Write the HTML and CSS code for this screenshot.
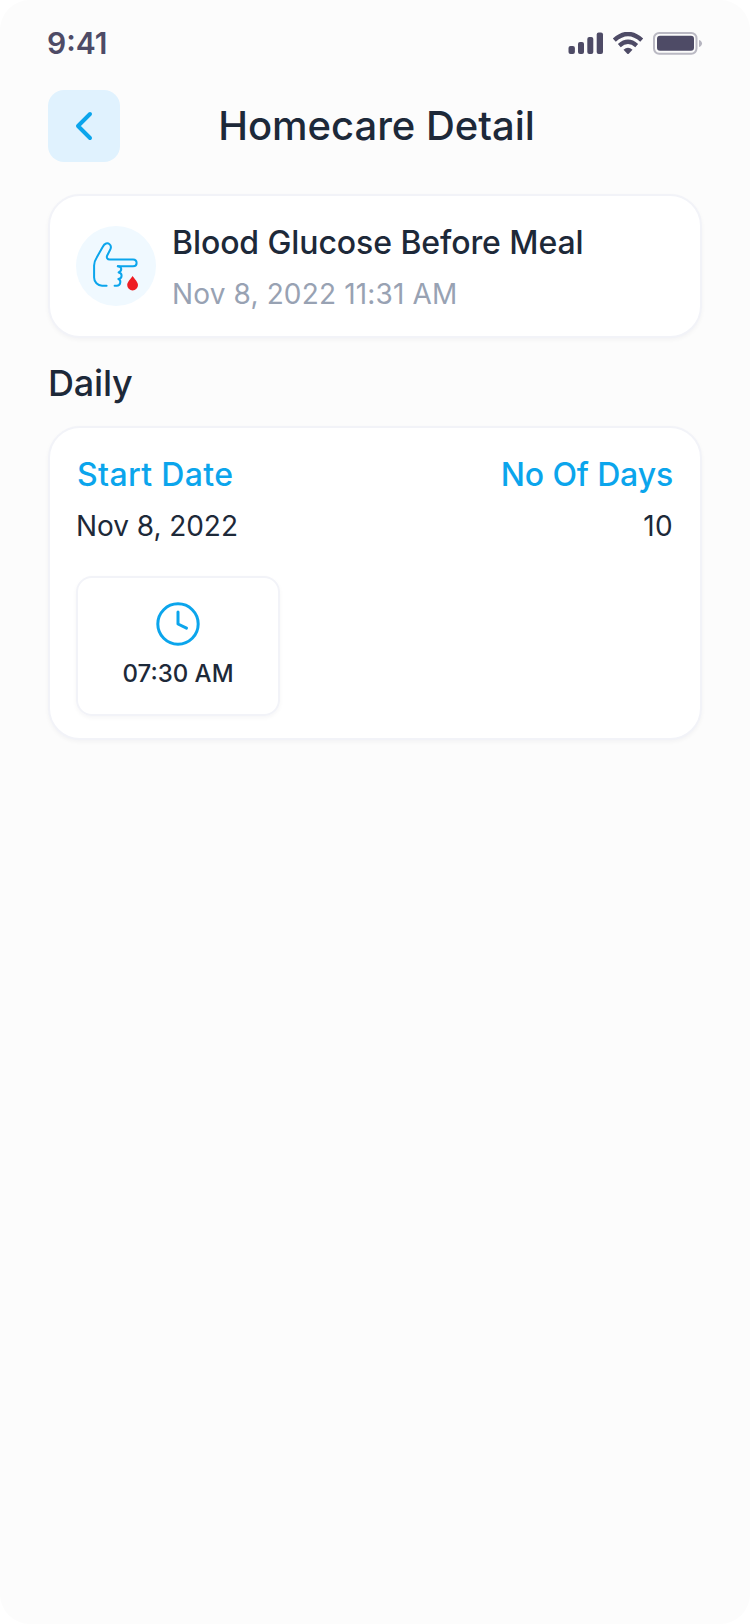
FILE: index.html
```html
<!DOCTYPE html>
<html lang="en">
<head>
<meta charset="utf-8">
<title>Homecare Detail</title>
<link rel="stylesheet" href="styles.css">
</head>
<body>
<main class="screen">
  <div class="status-bar">
    <span class="status-time">9:41</span>
    <svg class="status-icons" width="136" height="24" viewBox="0 0 136 24" fill="#4e4b66">
      <rect x="0.5" y="14" width="6.4" height="8" rx="2"/>
      <rect x="10" y="10" width="6" height="12" rx="2"/>
      <rect x="19.3" y="5" width="6" height="17" rx="2"/>
      <rect x="28.7" y="0.5" width="6.3" height="21.5" rx="2"/>
      <path d="M46.300 8.200 Q60 -4.200 73.700 8.200" fill="none" stroke="#4e4b66" stroke-width="4.400"/>
      <path d="M51.300 13.600 Q60 6 68.700 13.600" fill="none" stroke="#4e4b66" stroke-width="4.300"/>
      <path d="M55.500 17.800Q60 13.600 64.500 17.800L60.500 21.900Q60 22.300 59.500 21.900Z"/>
      <rect x="86" y="1" width="42.500" height="20.700" rx="5.200" fill="none" stroke="#4e4b66" stroke-opacity=".38" stroke-width="2"/>
      <rect x="89" y="3.700" width="37" height="15" rx="3"/>
      <path d="M131 8C133 8.600 134 10 134 11.500S133 14.400 131 15Z" fill-opacity=".4"/>
    </svg>
  </div>

  <header class="header">
    <button class="back" aria-label="Back">
      <svg width="72" height="72" viewBox="0 0 72 72" fill="none" stroke="#0ba5ec" stroke-width="4" stroke-linecap="round" stroke-linejoin="round"><path d="M42 24L30 36L42 48"/></svg>
    </button>
    <h1 class="title">Homecare Detail</h1>
  </header>

  <section class="card summary">
    <svg class="avatar" width="80" height="80" viewBox="0 0 80 80" fill="none">
      <circle cx="40" cy="40" r="40" fill="#f0f9ff"/>
      <g stroke="#0ba5ec" stroke-width="2" stroke-linecap="round" stroke-linejoin="round" transform="translate(-0.4 0)">
        <path d="M31 59.700H26.500C22 59.700 18.500 56 18.500 51.500V39.500C18.500 36 19.500 34 21 31.700L27.200 20.700C29 17.200 32 16.700 33.700 18C35.500 19.300 35.600 21.300 34.800 23.200L31.600 29.500C30.500 31.800 32 33.400 34 33.400H57.500C59.500 33.400 61 34.900 61 36.900S59.500 40.200 57.500 40.200H42.200"/>
        <path d="M42.200 40.200C46 40.200 47.200 44.500 43 46.400C47 47 47 52.300 42.800 53C46 54 45 59.700 41.200 59.700H39"/>
      </g>
      <path d="M56.600 50C58.200 52.600 62 56 62 59A5.400 5.400 0 0 1 51.200 59C51.200 56 55 52.600 56.600 50Z" fill="#ee1d23"/>
    </svg>
    <div class="summary-text">
      <h2 class="name">Blood Glucose Before Meal</h2>
      <p class="muted">Nov 8, 2022 11:31 AM</p>
    </div>
  </section>

  <h2 class="section-title">Daily</h2>

  <section class="card schedule">
    <div class="facts">
      <div>
        <h3 class="label start">Start Date</h3>
        <p class="value">Nov 8, 2022</p>
      </div>
      <div class="fact-end">
        <h3 class="label days">No Of Days</h3>
        <p class="value count">10</p>
      </div>
    </div>
    <div class="slot">
      <svg width="44" height="44" viewBox="0 0 44 44" fill="none" stroke="#0ba5ec" stroke-width="3" stroke-linecap="round" stroke-linejoin="round"><circle cx="22" cy="22" r="20.200"/><path d="M22 10V22L30.500 26.200"/></svg>
      <span class="slot-time">07:30 AM</span>
    </div>
  </section>
</main>
</body>
</html>
```

FILE: styles.css
```css
* { box-sizing: border-box; margin: 0; padding: 0; }

body {
  background: #fff;
  font-family: Inter, "Liberation Sans", sans-serif;
  color: #1d2939;
}

.screen {
  width: 750px;
  height: 1624px;
  padding: 0 48px;
  background: #fcfcfc;
  border-radius: 30px;
  overflow: hidden;
}

.status-bar {
  height: 90px;
  padding: 28px 0 0;
  display: flex;
  justify-content: space-between;
  align-items: flex-start;
}
.status-time {
  font-size: 30px;
  line-height: 30px;
  font-weight: 600;
  color: #4e4b66;
  margin-left: -1px;
}
.status-icons { margin: 4px -2px 0 0; }

.header {
  height: 72px;
  display: grid;
  grid-template-columns: 72px 1fr 72px;
  align-items: center;
}
.back {
  width: 72px;
  height: 72px;
  border: 0;
  border-radius: 16px;
  background: #e0f2fe;
}
.back svg { display: block; }
.title {
  padding-left: 3px;
  font-size: 40px;
  line-height: 72px;
  font-weight: 500;
  letter-spacing: -.04px;
  text-align: center;
  white-space: nowrap;
}

.card {
  background: #fff;
  border: 2px solid #f2f3f8;
  border-radius: 32px;
  box-shadow: 0 2px 4px rgba(16, 24, 40, .04);
}
.summary {
  height: 144px;
  margin-top: 32px;
  padding: 0 26px;
  display: flex;
  align-items: center;
  gap: 16px;
}
.summary-text { padding-top: 2px; }
.name {
  font-size: 32px;
  line-height: 48px;
  font-weight: 500;
  letter-spacing: -.09px;
}
.muted {
  margin-top: 5px;
  font-size: 28px;
  line-height: 44px;
  letter-spacing: .15px;
  color: #98a2b3;
}

.section-title {
  font-size: 36px;
  line-height: 90px;
  height: 88px;
  font-weight: 500;
  letter-spacing: -.2px;
}

.schedule {
  height: 314px;
  padding: 25px 26px 0;
}
.facts {
  display: flex;
  justify-content: space-between;
  height: 123px;
}
.fact-end {
  padding-right: 1px;
  text-align: right;
}
.label {
  font-size: 32px;
  line-height: 44px;
  font-weight: 500;
  color: #0ba5ec;
}
.start {
  padding-left: 1px;
  letter-spacing: .35px;
}
.days { letter-spacing: -.15px; }
.value {
  margin-top: 7px;
  font-size: 28px;
  line-height: 44px;
  letter-spacing: -.05px;
}
.count { letter-spacing: .4px; }

.slot {
  width: 204px;
  height: 140px;
  border: 2px solid #f2f3f8;
  border-radius: 16px;
  box-shadow: 0 2px 4px rgba(16, 24, 40, .04);
  display: flex;
  flex-direction: column;
  align-items: center;
  padding-top: 24px;
  gap: 9px;
}
.slot-time {
  font-size: 24px;
  line-height: 38px;
  font-weight: 500;
}
```
